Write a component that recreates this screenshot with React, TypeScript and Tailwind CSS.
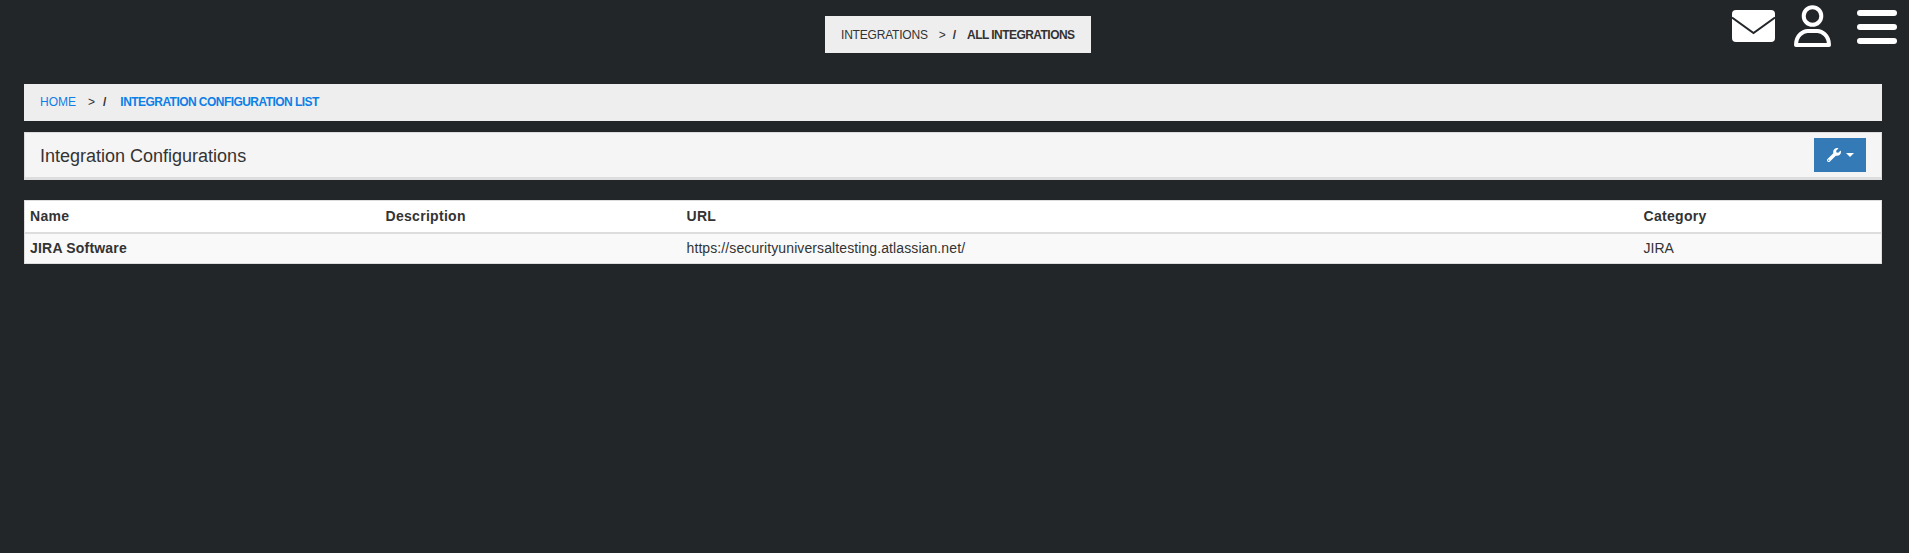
import React from "react";
import { FaWrench } from "react-icons/fa";

function MailIcon() {
  return (
    <svg width="43" height="32" viewBox="0 0 43 32">
      <rect width="43" height="32" rx="4" fill="#fff" />
      <path d="M0 7.5 L21.5 23 L43 7.5" fill="none" stroke="#222629" strokeWidth="2" />
    </svg>
  );
}

function UserIcon() {
  return (
    <svg width="37" height="42" viewBox="0 0 37 42">
      <circle cx="18.5" cy="11" r="8.8" fill="none" stroke="#fff" strokeWidth="4" />
      <path
        d="M2 40 C2 30 9.5 26 13.5 26 H23.5 C27.5 26 35 30 35 40 Z"
        fill="none"
        stroke="#fff"
        strokeWidth="4"
        strokeLinejoin="round"
      />
    </svg>
  );
}

function MenuIcon() {
  return (
    <div className="flex w-10 flex-col gap-2">
      <div className="h-1.5 rounded-full bg-white" />
      <div className="h-1.5 rounded-full bg-white" />
      <div className="h-1.5 rounded-full bg-white" />
    </div>
  );
}

export default function App() {
  return (
    <div className="h-[553px] overflow-hidden bg-[#222629] font-['Liberation_Sans',Arial,sans-serif] text-[#333]">
      {/* Top bar */}
      <div className="grid h-[84px] grid-cols-[825px_266px_1fr]">
        <div />
        <div className="mt-4 flex h-[37px] items-center bg-[#eee] pl-4 text-xs uppercase">
          <span className="tracking-[-0.2px]">Integrations</span>
          <span className="ml-[11px]">&gt;</span>
          <span className="ml-[7px] font-bold">/</span>
          <span className="ml-[11px] font-bold tracking-[-0.55px]">All Integrations</span>
        </div>
        <div className="flex items-start">
          <div className="ml-[641px] mt-2.5">
            <MailIcon />
          </div>
          <div className="ml-[19px] mt-[5px]">
            <UserIcon />
          </div>
          <div className="ml-[26px] mt-2.5">
            <MenuIcon />
          </div>
        </div>
      </div>

      <div className="mx-6 w-[1858px]">
        {/* Breadcrumb */}
        <div className="flex h-[37px] items-center bg-[#eee] pb-[2px] pl-4 text-xs uppercase">
          <span className="text-[#0d7fe6]">Home</span>
          <span className="ml-[12px]">&gt;</span>
          <span className="ml-[8px] font-bold">/</span>
          <span className="ml-[14px] font-bold tracking-[-0.55px] text-[#0d7fe6]">Integration Configuration List</span>
        </div>

        {/* Heading */}
        <div className="mt-[11px] flex h-12 items-center justify-between border border-b-[3px] border-[#ddd] bg-[#f5f5f5] px-[15px]">
          <h3 className="pt-[2px] text-lg">Integration Configurations</h3>
          <button className="mt-[-1px] flex h-[34px] w-[52px] items-center justify-center gap-[5px] bg-[#337ab7] text-white">
            <FaWrench className="h-[14px] w-[14px]" />
            <span className="h-0 w-0 border-x-4 border-t-4 border-x-transparent border-t-white" />
          </button>
        </div>

        {/* Table */}
        <table className="mt-5 w-full table-fixed border border-[#ddd] bg-white text-left text-sm">
          <colgroup>
            <col className="w-[356px]" />
            <col className="w-[301px]" />
            <col className="w-[957px]" />
            <col />
          </colgroup>
          <thead>
            <tr className="h-[32px] border-b-2 border-[#ddd]">
              <th className="px-[5px] font-bold tracking-[0.3px]">Name</th>
              <th className="px-[5px] font-bold tracking-[0.3px]">Description</th>
              <th className="px-[5px] font-bold tracking-[0.3px]">URL</th>
              <th className="px-[5px] font-bold tracking-[0.3px]">Category</th>
            </tr>
          </thead>
          <tbody>
            <tr className="h-[31px] bg-[#f9f9f9]">
              <td className="px-[5px] font-bold tracking-[0.2px]">JIRA Software</td>
              <td className="px-[5px]" />
              <td className="px-[5px] tracking-[0.1px]">https://securityuniversaltesting.atlassian.net/</td>
              <td className="px-[5px]">JIRA</td>
            </tr>
          </tbody>
        </table>
      </div>
    </div>
  );
}
